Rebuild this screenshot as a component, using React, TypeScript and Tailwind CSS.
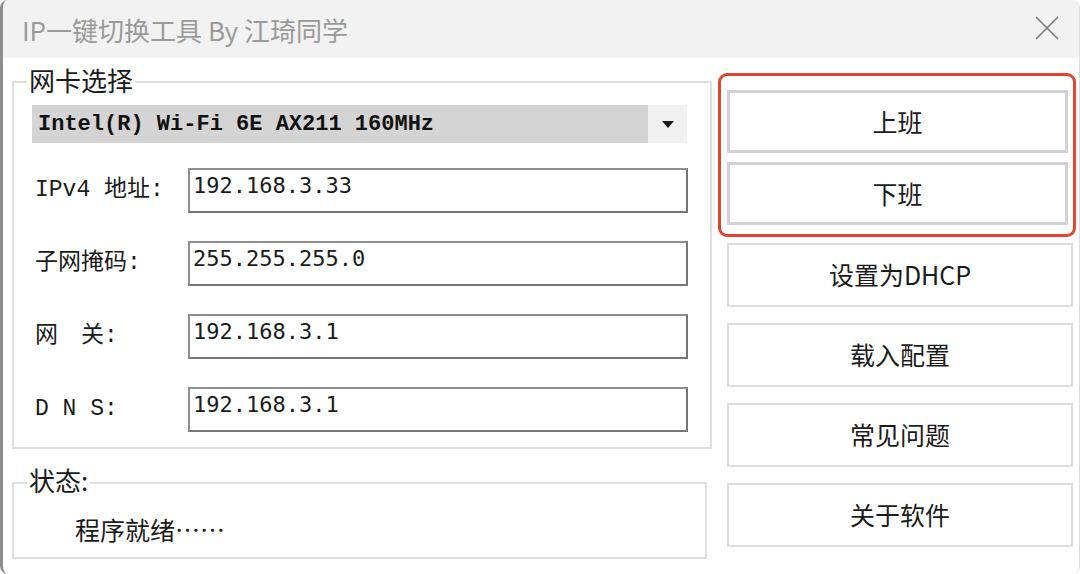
const CJK = "font-['Noto_Sans_CJK_SC','Noto_Sans',sans-serif]";
const LABEL = "font-['Liberation_Mono','Noto_Sans_CJK_SC',monospace]";
const VALUE = "font-['DejaVu_Sans_Mono','Noto_Sans_CJK_SC',monospace]";

const fields = [
  { label: 'IPv4 地址:', value: '192.168.3.33' },
  { label: '子网掩码:', value: '255.255.255.0' },
  { label: '网　关:', value: '192.168.3.1' },
  { label: 'D N S:', value: '192.168.3.1' },
];

const actions = ['设置为DHCP', '载入配置', '常见问题', '关于软件'];

function GroupLabel({ text, offset }: { text: string; offset: string }) {
  return (
    <div
      className={`${offset} ml-[13px] w-fit bg-white px-[2px] text-[26px] leading-[30px] text-[#1b1b1b] ${CJK}`}
    >
      {text}
    </div>
  );
}

function FieldRow({ label, value }: { label: string; value: string }) {
  return (
    <div className="flex items-center pl-[21px]">
      <span className={`w-[153px] text-[23px] text-[#1b1b1b] ${LABEL}`}>{label}</span>
      <div
        className={`h-[45px] w-[500px] border-2 border-[#8f8f8f] border-r-[#767676] border-b-[#767676] bg-white pl-[3px] pt-[2px] text-[22px] leading-[28px] text-[#1b1b1b] ${VALUE}`}
      >
        {value}
      </div>
    </div>
  );
}

function ActionButton({ text, strong }: { text: string; strong?: boolean }) {
  return (
    <button
      className={`flex items-center justify-center bg-white text-[25px] text-[#1b1b1b] ${CJK} ${
        strong
          ? 'h-[63px] w-full border-[3px] border-[#d2d2d2]'
          : 'ml-[9px] h-[64px] w-[346px] border-2 border-[#dcdcdc]'
      }`}
    >
      {text}
    </button>
  );
}

export default function App() {
  return (
    <div className="h-[574px] w-[1080px] overflow-hidden rounded-[8px] border-l-[3px] border-r border-l-[#8e8e8e] border-r-[#dedede] bg-white">
      {/* title bar */}
      <div className="flex h-[58px] items-center justify-between bg-[#f2f2f2] pl-[19px] pr-[20px]">
        <span className={`text-[26px] text-[#9a9a9a] ${CJK}`}>IP一键切换工具 By 江琦同学</span>
        <svg width="24" height="24" viewBox="0 0 24 24" className="mb-[2px]">
          <path d="M1 1 L23 23 M23 1 L1 23" stroke="#7a7a7a" strokeWidth="1.6" fill="none" />
        </svg>
      </div>

      <div className="flex pl-[9px]">
        {/* left column */}
        <div className="w-[700px]">
          <div className="mt-[23px] border-2 border-[#e0e0e0] pb-[15px]">
            <GroupLabel text="网卡选择" offset="-mt-[18px]" />
            <div className="ml-[18px] mt-[10px] flex h-[38px] w-[655px]">
              <div className="flex flex-1 items-center bg-[#d4d4d4] pl-[6px]">
                <span className={`text-[22px] font-bold text-[#111] font-['Liberation_Mono',monospace]`}>
                  Intel(R) Wi-Fi 6E AX211 160MHz
                </span>
              </div>
              <div className="flex w-[39px] items-center justify-center bg-[#f0f0f0]">
                <svg width="12" height="7" viewBox="0 0 12 7">
                  <polygon points="0,0 12,0 6,7" fill="#1b1b1b" />
                </svg>
              </div>
            </div>
            <div className="mt-[25px] flex flex-col gap-[28px]">
              {fields.map((f) => (
                <FieldRow key={f.label} label={f.label} value={f.value} />
              ))}
            </div>
          </div>

          <div className="mt-[33px] w-[695px] border-2 border-[#e0e0e0] pb-[12px]">
            <GroupLabel text="状态:" offset="-mt-[19px]" />
            <div className={`ml-[61px] mt-[18px] text-[25px] leading-[32px] text-[#1b1b1b] ${CJK}`}>
              程序就绪……
            </div>
          </div>
        </div>

        {/* right column */}
        <div className="ml-[6px] flex w-[358px] flex-col">
          <div className="mt-[15px] flex flex-col gap-[9px] rounded-[9px] border-[3px] border-[#e2442f] pb-[9px] pl-[6px] pr-[5px] pt-[14px]">
            <ActionButton text="上班" strong />
            <ActionButton text="下班" strong />
          </div>
          <div className="mt-[6px] flex flex-col gap-[16px]">
            {actions.map((a) => (
              <ActionButton key={a} text={a} />
            ))}
          </div>
        </div>
      </div>
    </div>
  );
}
